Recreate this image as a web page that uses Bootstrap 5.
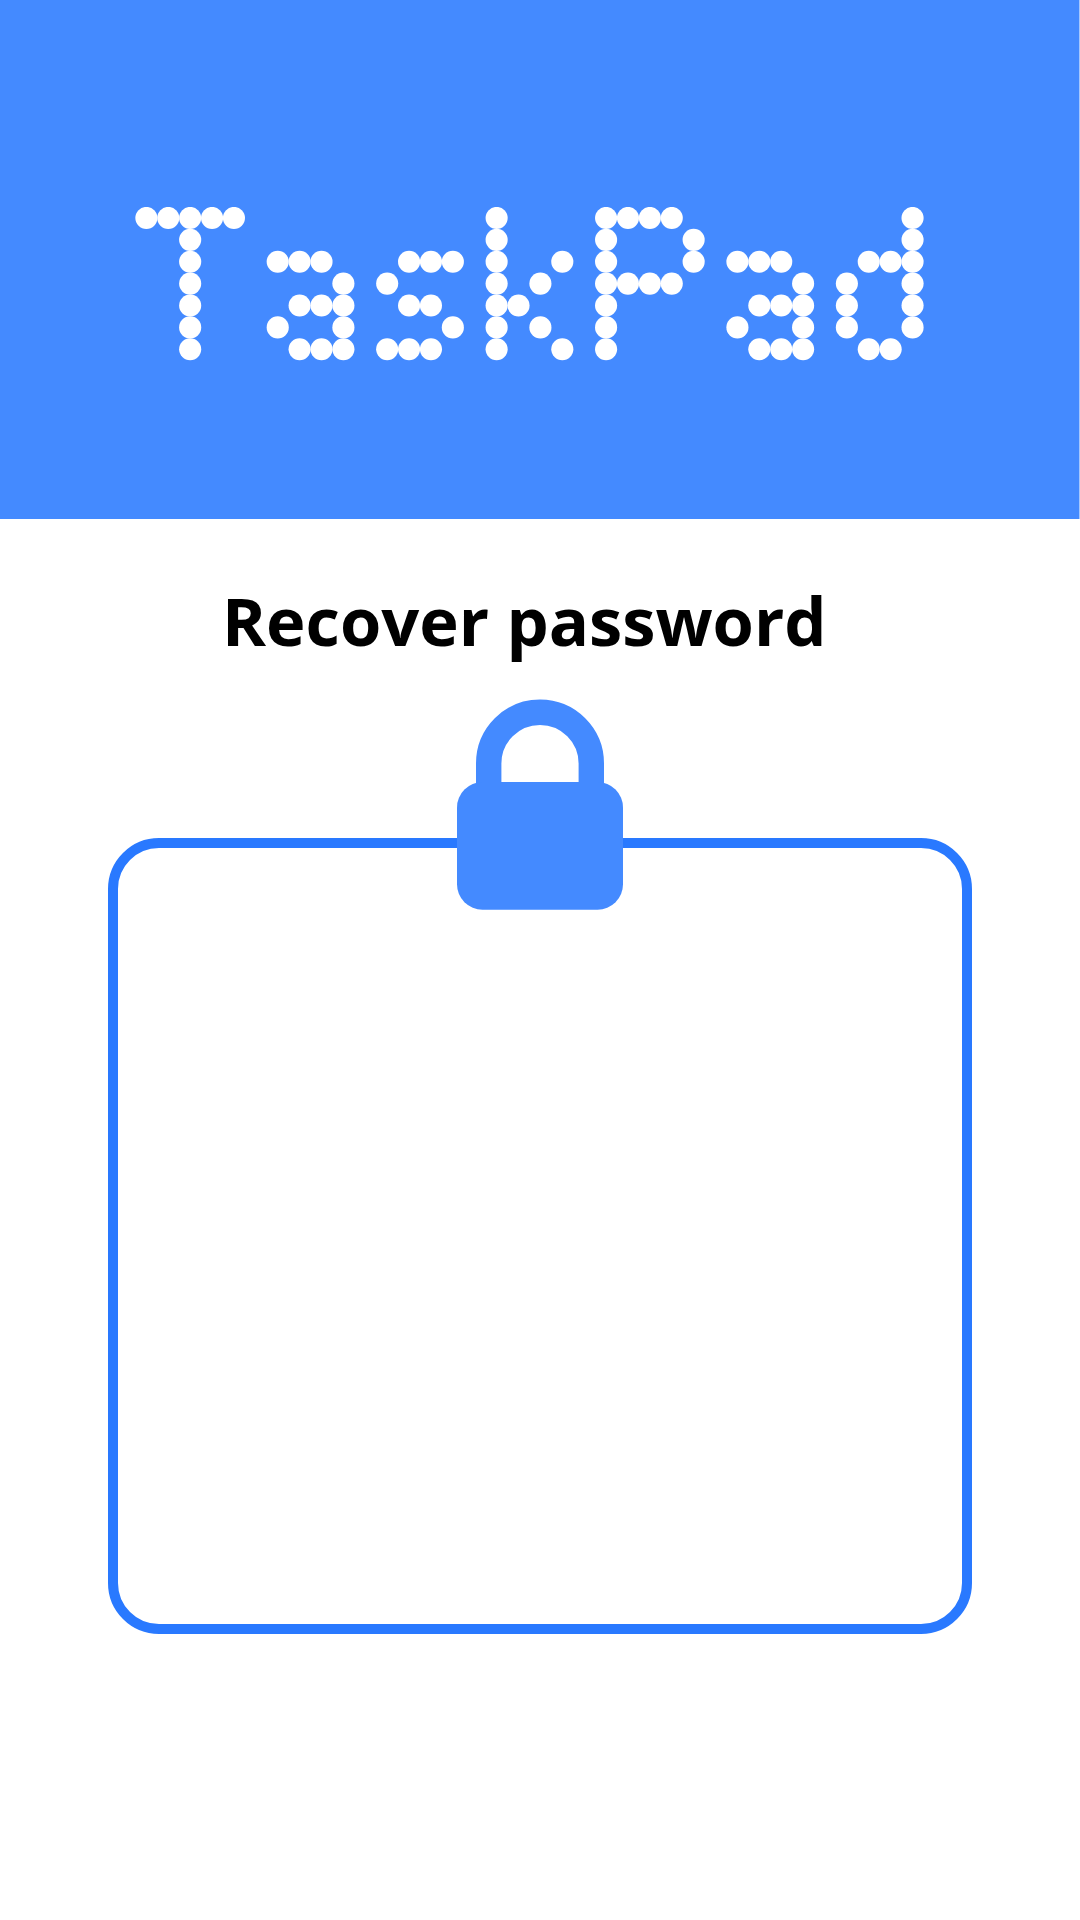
<!DOCTYPE html>
<html lang="en">
<head>
<meta charset="utf-8">
<meta name="viewport" content="width=device-width, initial-scale=1">
<title>TaskPad</title>
<link rel="stylesheet" href="https://cdn.jsdelivr.net/npm/bootstrap@5.3.0/dist/css/bootstrap.min.css">
<style>
  body { font-family: "Open Sans", "Noto Sans", sans-serif; background: #fff; }
  .screen { width: 1080px; height: 1920px; }
  .brand-bar { height: 519px; background: #448aff; border-right: 1px solid #a5c7ff; padding: 207px 0 0 135px; }
  .recover-title { font-size: 66.8px; font-weight: 700; line-height: 92px; color: #000; margin: 56px 0 0 222px; white-space: nowrap; }
  .lock-icon { width: 166px; height: 212px; margin-top: 31.6px; z-index: 1; }
  .form-panel { width: 864px; height: 796px; margin-top: -72.6px; border: 10px solid #2979ff; border-radius: 51px; background: #fff; }
</style>
</head>
<body>
<div class="screen d-flex flex-column overflow-hidden">
  <header class="brand-bar flex-shrink-0">
    <h1 class="m-0">
      <svg id="wordmark" class="d-block" width="789" height="154" viewBox="-0.02 0 36.04 7.035" preserveAspectRatio="xMinYMin meet" fill="#fff" role="img" aria-label="TaskPad"></svg>
    </h1>
  </header>
  <main class="d-flex flex-column">
    <h2 class="recover-title">Recover password</h2>
    <svg class="lock-icon align-self-center flex-shrink-0 position-relative" viewBox="0 0 166 212" fill="#448aff" aria-hidden="true">
      <path d="M31.7 86V64.5a51.3 51.3 0 0 1 102.6 0V86" fill="none" stroke="#448aff" stroke-width="25.4"/>
      <rect y="83" width="166" height="127.8" rx="25.5"/>
    </svg>
    <section class="form-panel align-self-center flex-shrink-0"></section>
  </main>
</div>
<script src="https://cdn.jsdelivr.net/npm/bootstrap@5.3.0/dist/js/bootstrap.bundle.min.js"></script>
<script>
  // Dot-matrix wordmark: one circle for each # on a 36 x 7 grid
  const rows = [
    "#####...........#....####..........#",
    "..#.............#....#...#.........#",
    "..#...###...###.#..#.#...#.###...###",
    "..#......#.#....#.#..####.....#.#..#",
    "..#....###..##..##...#......###.#..#",
    "..#...#..#....#.#.#..#.....#..#.#..#",
    "..#....###.###..#..#.#......###..##."
  ];
  const wordmark = document.getElementById("wordmark");
  rows.forEach((row, y) => [...row].forEach((c, x) => {
    if (c !== "#") return;
    const dot = document.createElementNS("http://www.w3.org/2000/svg", "circle");
    dot.setAttribute("cx", x + 0.5);
    dot.setAttribute("cy", y + 0.5);
    dot.setAttribute("r", 0.505);
    wordmark.appendChild(dot);
  }));
</script>
</body>
</html>
